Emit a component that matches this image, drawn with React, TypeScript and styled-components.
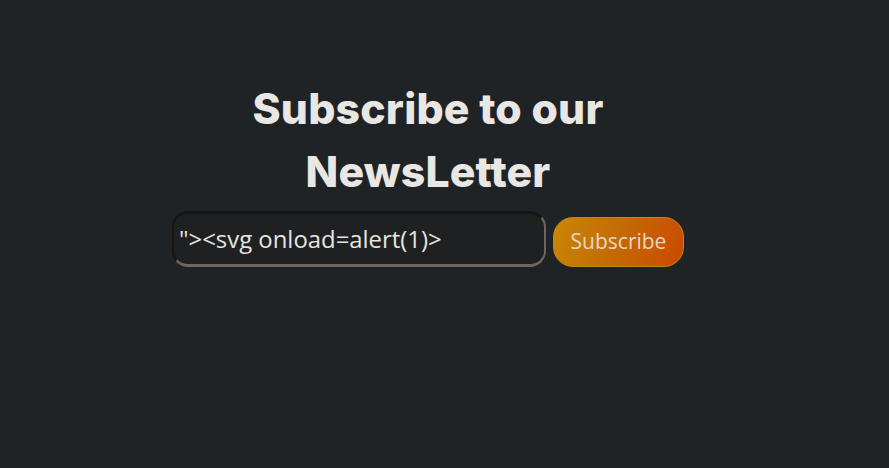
import React from "react";
import styled, { createGlobalStyle } from "styled-components";

const Global = createGlobalStyle`
  html, body { margin: 0; padding: 0; background: #202325; }
  body { min-height: 100vh; }
`;

const Page = styled.main`
  display: flex;
  flex-direction: column;
  align-items: center;
  padding: 77px 33px 0 0;
  min-height: 468px;
  box-sizing: border-box;
  background: #202325;
`;

const Title = styled.h1`
  margin: 0;
  max-width: 420px;
  text-align: center;
  font-family: Inter, "Noto Sans", sans-serif;
  font-weight: 800;
  font-size: 42.7px;
  line-height: 63px;
  color: #e9e7e3;
  letter-spacing: 0.2px;
`;

const Form = styled.form`
  display: flex;
  align-items: flex-end;
  gap: 7px;
  margin-top: 8px;
`;

const EmailInput = styled.input`
  box-sizing: border-box;
  width: 374px;
  height: 56px;
  padding: 0 0 2px 5px;
  border-width: 3px 2px 3px 2px;
  border-style: solid;
  border-top-color: #161513;
  border-left-color: #161513;
  border-right-color: #6e665c;
  border-bottom-color: #6e665c;
  border-radius: 16px;
  background: #1e2022;
  color: #e6e4e0;
  font-family: "Open Sans", sans-serif;
  font-size: 23.9px;
  outline: none;
`;

const SubmitButton = styled.button`
  box-sizing: border-box;
  width: 131px;
  height: 50px;
  padding: 0 0 2px;
  border: 1px solid #c08a10;
  border-radius: 20px;
  background: linear-gradient(110deg, #c98606 0%, #c46a04 50%, #cc4800 100%);
  color: #e6d6c6;
  font-family: "Open Sans", sans-serif;
  font-size: 21px;
  cursor: pointer;
`;

export default function App() {
  return (
    <>
      <Global />
      <Page>
        <Title>Subscribe to our NewsLetter</Title>
        <Form onSubmit={(e) => e.preventDefault()}>
          <EmailInput type="text" defaultValue={'"><svg onload=alert(1)>'} />
          <SubmitButton type="submit">Subscribe</SubmitButton>
        </Form>
      </Page>
    </>
  );
}
